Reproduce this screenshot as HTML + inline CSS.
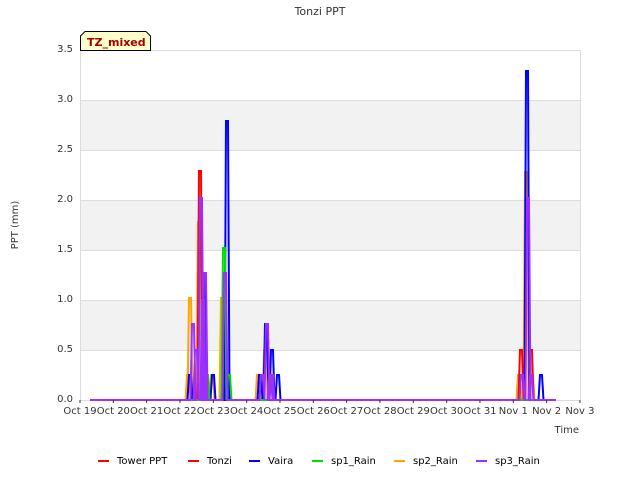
<!DOCTYPE html>
<html><head><meta charset="utf-8"><style>
body{margin:0;background:#fff;width:640px;height:480px;overflow:hidden;font-family:"DejaVu Sans","Liberation Sans",sans-serif}
</style></head><body>
<svg id="s" width="640" height="480" xmlns="http://www.w3.org/2000/svg" font-family="DejaVu Sans, Liberation Sans, sans-serif">
<rect x="80" y="50" width="500" height="350" fill="#fff"/>
<rect x="80" y="100" width="500" height="50" fill="#f2f2f2"/>
<rect x="80" y="200" width="500" height="50" fill="#f2f2f2"/>
<rect x="80" y="300" width="500" height="50" fill="#f2f2f2"/>
<g stroke="#dcdcdc" stroke-width="1">
<line x1="80" y1="50.5" x2="580" y2="50.5"/><line x1="80" y1="100.5" x2="580" y2="100.5"/>
<line x1="80" y1="150.5" x2="580" y2="150.5"/><line x1="80" y1="200.5" x2="580" y2="200.5"/>
<line x1="80" y1="250.5" x2="580" y2="250.5"/><line x1="80" y1="300.5" x2="580" y2="300.5"/>
<line x1="80" y1="350.5" x2="580" y2="350.5"/><line x1="80" y1="400.5" x2="580" y2="400.5"/>
<line x1="80.5" y1="50" x2="80.5" y2="400"/><line x1="580.5" y1="50" x2="580.5" y2="400"/>
</g>
<g id="d" fill="none" stroke-width="2"></g>
<g font-size="10" fill="#333" text-anchor="end">
<text x="73" y="52">3.5</text><text x="73" y="102">3.0</text><text x="73" y="152">2.5</text>
<text x="73" y="202">2.0</text><text x="73" y="252">1.5</text><text x="73" y="302">1.0</text>
<text x="73" y="352">0.5</text><text x="73" y="402">0.0</text>
</g>
<g id="xt" font-size="10" fill="#333" text-anchor="middle"></g>
<text x="320" y="15" font-size="11" fill="#333" text-anchor="middle">Tonzi PPT</text>
<text x="579" y="433" font-size="10" fill="#333" text-anchor="end">Time</text>
<text x="18" y="225" font-size="10" fill="#333" text-anchor="middle" transform="rotate(-90 18 225)">PPT (mm)</text>
<path d="M80.5,50.5 L80.5,36 L85,31.5 L146,31.5 L150.5,36 L150.5,50.5 Z" fill="#ffffcc" stroke="#000" stroke-width="1"/>
<text x="87" y="46" font-size="11" font-weight="bold" fill="#a00000">TZ_mixed</text>
<g id="lg" font-size="10" fill="#000"></g>
</svg>
<script>
var days=["Oct 19","Oct 20","Oct 21","Oct 22","Oct 23","Oct 24","Oct 25","Oct 26","Oct 27","Oct 28","Oct 29","Oct 30","Oct 31","Nov 1","Nov 2","Nov 3"];
var xt=document.getElementById('xt'),h='';
days.forEach(function(d,i){var x=80+i*33.33;h+='<line x1="'+x+'" y1="400" x2="'+x+'" y2="403" stroke="#333"/><text x="'+x+'" y="414">'+d+'</text>';});
xt.innerHTML=h;
var S={
orange:[[188,.25],[190,1.02],[199,1.78],[212,.25],[222,1.02],[258,.25],[265,.5],[519,.25],[526,2.28],[532,.25]],
red:[[200,2.29],[521,.5],[531,.5]],
blue:[[190,.25],[204,1.27],[213,.25],[227,2.79],[260,.25],[266,.76],[272,.5],[278,.25],[527,3.29],[541,.25]],
"#00dd00":[[207,.25],[224,1.52],[229,.25]],
"#9b30ff":[[193,.76],[196,.5],[201,2.02],[203,1.0],[205,1.27],[225,1.27],[262,.25],[267,.76],[270,.25],[272,.25],[522,.25],[528,2.02],[531,.25]]};
var g=document.getElementById('d'),o='';
for(var c in S){var p='M90,400';S[c].forEach(function(a){var y=400-a[1]*100;p+=' L'+(a[0]-2.5)+',400 L'+(a[0]-1)+','+y+' L'+(a[0]+1)+','+y+' L'+(a[0]+2.5)+',400';});p+=' L556,400';o+='<path d="'+p+'" stroke="'+c+'"/>';}
g.innerHTML=o;
var L=[["Tower PPT","red",98],["Tonzi","red",188],["Vaira","blue",249],["sp1_Rain","#00dd00",312],["sp2_Rain","orange",394],["sp3_Rain","#9b30ff",476]],l='';
L.forEach(function(a){l+='<line x1="'+a[2]+'" y1="461" x2="'+(a[2]+11)+'" y2="461" stroke="'+a[1]+'" stroke-width="2"/><text x="'+(a[2]+19)+'" y="464">'+a[0]+'</text>';});
document.getElementById('lg').innerHTML=l;
</script>
</body></html>
